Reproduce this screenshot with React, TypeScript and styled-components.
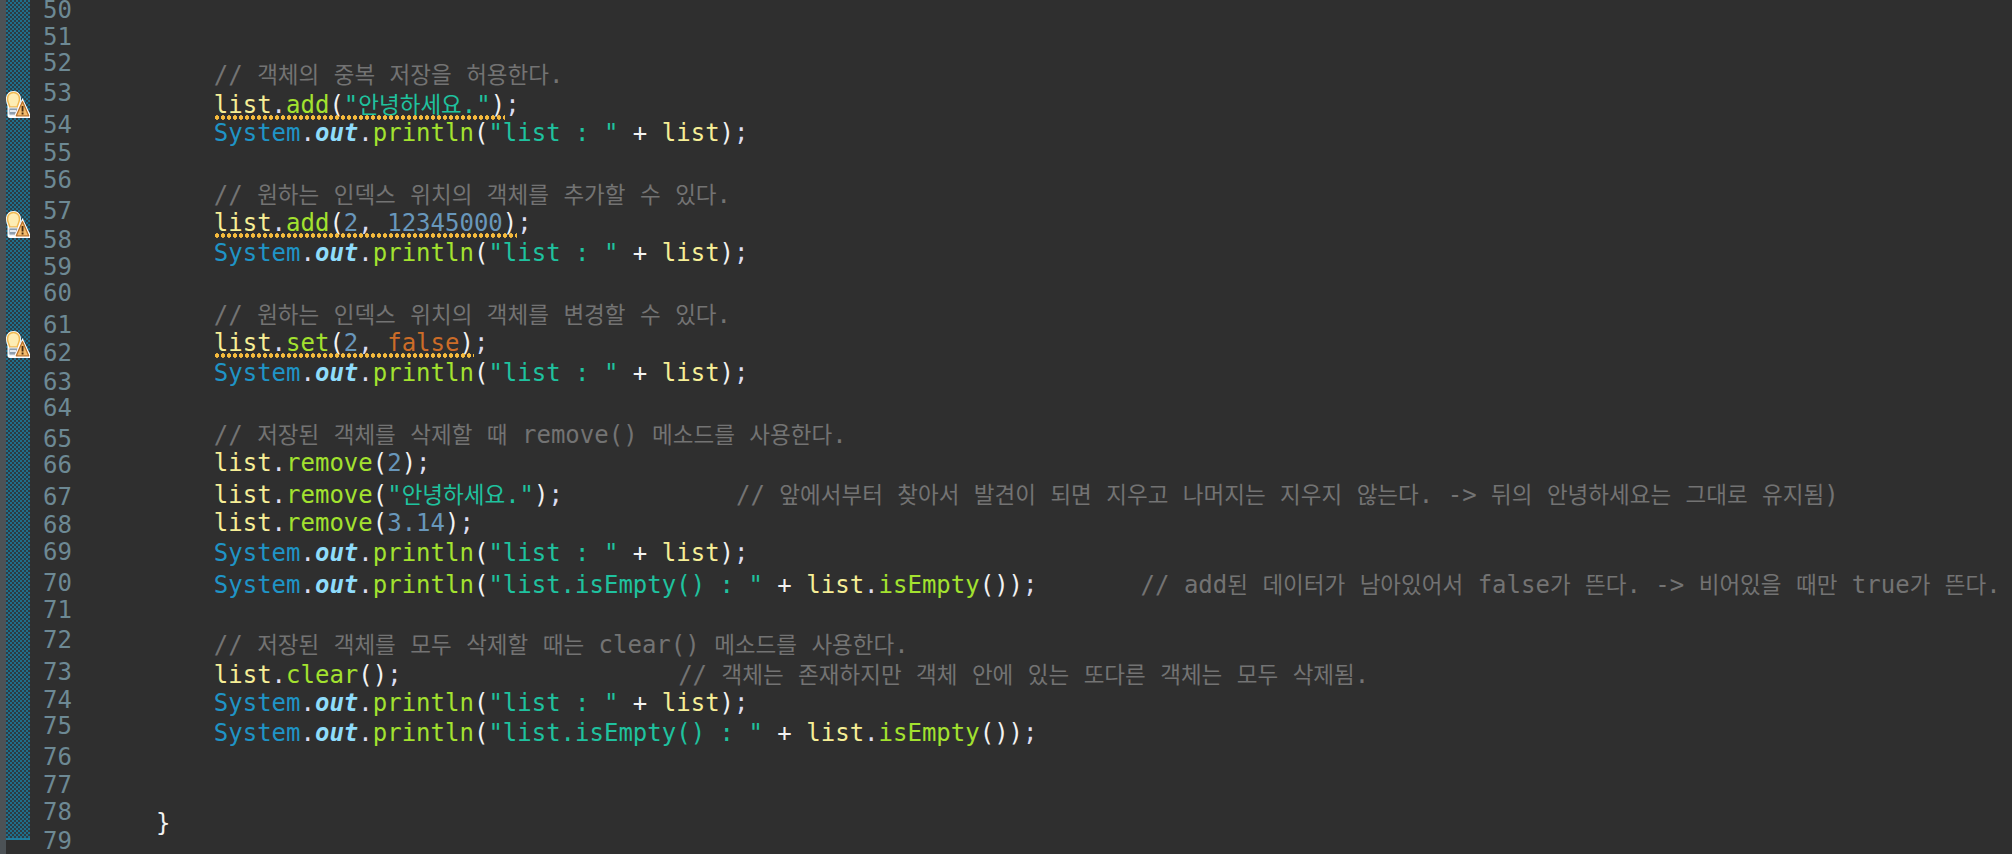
import React from "react";
import styled, { createGlobalStyle } from "styled-components";

type Kind = "plain" | "local" | "method" | "string" | "type" | "field" | "num" | "bool" | "comment" | "punct";
type Token = [Kind, string];

const colors: Record<Kind, string> = {
  plain: "#f2f2f2",
  local: "#f6ee96",
  method: "#a3e22f",
  string: "#1fc29f",
  type: "#1f94c6",
  field: "#8fdcfb",
  num: "#6897bb",
  bool: "#cc6c28",
  comment: "#737373",
  punct: "#dcdcf0",
};

const GlobalStyle = createGlobalStyle`
  html, body {
    margin: 0;
    height: 100%;
    background: #2f2f2f;
  }
  #root {
    height: 100%;
  }
`;

const Editor = styled.div`
  display: flex;
  width: 2012px;
  height: 854px;
  overflow: hidden;
  background: #2f2f2f;
  font-family: "DejaVu Sans Mono", "Noto Sans CJK KR", monospace;
  font-size: 24px;
`;

const Strip = styled.div`
  width: 6px;
  flex: none;
  background: #4c5256;
`;

const Ruler = styled.div`
  position: relative;
  width: 24px;
  height: 838px;
  flex: none;
  border-bottom: 2px solid #1f7c9e;
  background-image: conic-gradient(#1f6f8c 25%, #2d3c44 0 50%, #1f6f8c 0 75%, #2d3c44 0);
  background-size: 4px 4px;
`;

const Marker = styled.svg<{ $top: number }>`
  position: absolute;
  left: 0;
  top: ${(p) => p.$top}px;
`;

const Numbers = styled.div`
  width: 42px;
  flex: none;
  margin-left: 13px;
  color: #6d8994;
`;

const NumberRow = styled.div<{ $h: number }>`
  height: ${(p) => p.$h}px;
  line-height: 20px;
  white-space: nowrap;
`;

const Code = styled.div`
  flex: 1;
  padding: 58px 0 0 71px;
  white-space: pre;
`;

const Body = styled.div`
  padding-left: 4ch;
`;

const Row = styled.div`
  height: 30px;
  line-height: 30px;
`;

const Tok = styled.span<{ $kind: Kind }>`
  color: ${(p) => colors[p.$kind]};
  ${(p) => (p.$kind === "field" ? "font-weight: 700; font-style: italic;" : "")}
`;

const Hangul = styled.span`
  font-family: "Noto Sans CJK KR", sans-serif;
  font-size: 22.5px;
`;

const Warn = styled.span`
  position: relative;
  &::after {
    content: "";
    position: absolute;
    left: 0;
    right: 0;
    bottom: -1px;
    height: 5px;
    background-image: radial-gradient(circle at center, #f5ba3c 2px, transparent 2.5px);
    background-size: 6px 5px;
  }
`;

const Statement = styled.span<{ $col: number }>`
  display: inline-block;
  width: calc(${(p) => p.$col}ch + 2px);
`;

const heights = [27, 26, 30, 32, 28, 27, 31, 29, 27, 26, 32, 28, 29, 26, 31, 26, 32, 28, 27, 31, 27, 30, 32, 28, 26, 31, 28, 27, 29, 20];

function Text({ kind, text }: { kind: Kind; text: string }) {
  return (
    <Tok $kind={kind}>
      {text.split(/([가-힣]+)/).map((part, i) => (i % 2 ? <Hangul key={i}>{part}</Hangul> : part))}
    </Tok>
  );
}

function Tokens({ items }: { items: Token[] }) {
  return (
    <>
      {items.map(([kind, text], i) => (
        <Text key={i} kind={kind} text={text} />
      ))}
    </>
  );
}

const printList: Token[] = [
  ["type", "System"],
  ["punct", "."],
  ["field", "out"],
  ["punct", "."],
  ["method", "println"],
  ["plain", "("],
  ["string", '"list : "'],
  ["plain", " + "],
  ["local", "list"],
  ["plain", ")"],
  ["punct", ";"],
];

const printEmpty: Token[] = [
  ["type", "System"],
  ["punct", "."],
  ["field", "out"],
  ["punct", "."],
  ["method", "println"],
  ["plain", "("],
  ["string", '"list.isEmpty() : "'],
  ["plain", " + "],
  ["local", "list"],
  ["punct", "."],
  ["method", "isEmpty"],
  ["plain", "())"],
  ["punct", ";"],
];

const call = (name: string, ...args: Token[]): Token[] => [
  ["local", "list"],
  ["punct", "."],
  ["method", name],
  ["plain", "("],
  ...args,
];

const close: Token[] = [
  ["plain", ")"],
  ["punct", ";"],
];

function BulbWarning({ top }: { top: number }) {
  return (
    <Marker $top={top} width="24" height="27" viewBox="0 0 24 27">
      <path d="M7.500 0C3 0 0 3.500 0 8c0 3.500 1.500 5.500 1.500 8v8.500C1.500 26 2.500 27 4 27h7c1.500 0 2.500-1 2.500-2.500V16c1-2 1.500-4.500 1.500-8C15 3.500 12 0 7.500 0z" fill="#fff" />
      <path d="M7.500 1.500C4 1.500 1.500 4.300 1.500 8c0 3 1.600 5 2.300 8h7.400c.7-3 2.300-5 2.300-8 0-3.700-2.500-6.500-6-6.500z" fill="#fdedb4" stroke="#f0b850" strokeWidth="1.500" />
      <rect x="3" y="17" width="9" height="7" rx="1" fill="#8d9eae" stroke="#dfe6ec" />
      <rect x="4" y="19" width="6" height="2" fill="#e4ebf1" />
      <path d="M16.500 7L24 23v4H9v-4z" fill="#fff" />
      <path d="M16.500 10.500L22.700 24.800H10.300z" fill="#f3bc6c" stroke="#b9722a" strokeWidth="1.300" strokeLinejoin="round" />
      <rect x="15.600" y="15" width="1.900" height="5.500" fill="#4a2c10" />
      <rect x="15.600" y="21.500" width="1.900" height="2" fill="#4a2c10" />
    </Marker>
  );
}

export default function App() {
  return (
    <Editor>
      <GlobalStyle />
      <Strip />
      <Ruler>
        <BulbWarning top={91} />
        <BulbWarning top={211} />
        <BulbWarning top={331} />
      </Ruler>
      <Numbers>
        {heights.map((h, i) => (
          <NumberRow key={i} $h={h}>
            {50 + i}
          </NumberRow>
        ))}
      </Numbers>
      <Code>
        <Body>
          <Row>
            <Text kind="comment" text="// 객체의 중복 저장을 허용한다." />
          </Row>
          <Row>
            <Warn>
              <Tokens items={call("add", ["string", '"안녕하세요."'], ["plain", ")"])} />
            </Warn>
            <Tok $kind="punct">;</Tok>
          </Row>
          <Row>
            <Tokens items={printList} />
          </Row>
          <Row />
          <Row>
            <Text kind="comment" text="// 원하는 인덱스 위치의 객체를 추가할 수 있다." />
          </Row>
          <Row>
            <Warn>
              <Tokens items={call("add", ["num", "2"], ["punct", ", "], ["num", "12345000"], ["plain", ")"])} />
            </Warn>
            <Tok $kind="punct">;</Tok>
          </Row>
          <Row>
            <Tokens items={printList} />
          </Row>
          <Row />
          <Row>
            <Text kind="comment" text="// 원하는 인덱스 위치의 객체를 변경할 수 있다." />
          </Row>
          <Row>
            <Warn>
              <Tokens items={call("set", ["num", "2"], ["punct", ", "], ["bool", "false"], ["plain", ")"])} />
            </Warn>
            <Tok $kind="punct">;</Tok>
          </Row>
          <Row>
            <Tokens items={printList} />
          </Row>
          <Row />
          <Row>
            <Text kind="comment" text="// 저장된 객체를 삭제할 때 remove() 메소드를 사용한다." />
          </Row>
          <Row>
            <Tokens items={[...call("remove", ["num", "2"]), ...close]} />
          </Row>
          <Row>
            <Statement $col={36}>
              <Tokens items={[...call("remove", ["string", '"안녕하세요."']), ...close]} />
            </Statement>
            <Text kind="comment" text="// 앞에서부터 찾아서 발견이 되면 지우고 나머지는 지우지 않는다. -> 뒤의 안녕하세요는 그대로 유지됨)" />
          </Row>
          <Row>
            <Tokens items={[...call("remove", ["num", "3.14"]), ...close]} />
          </Row>
          <Row>
            <Tokens items={printList} />
          </Row>
          <Row>
            <Statement $col={64}>
              <Tokens items={printEmpty} />
            </Statement>
            <Text kind="comment" text="// add된 데이터가 남아있어서 false가 뜬다. -> 비어있을 때만 true가 뜬다." />
          </Row>
          <Row />
          <Row>
            <Text kind="comment" text="// 저장된 객체를 모두 삭제할 때는 clear() 메소드를 사용한다." />
          </Row>
          <Row>
            <Statement $col={32}>
              <Tokens items={[...call("clear"), ...close]} />
            </Statement>
            <Text kind="comment" text="// 객체는 존재하지만 객체 안에 있는 또다른 객체는 모두 삭제됨." />
          </Row>
          <Row>
            <Tokens items={printList} />
          </Row>
          <Row>
            <Tokens items={printEmpty} />
          </Row>
          <Row />
          <Row />
        </Body>
        <Row>
          <Tok $kind="plain">{"}"}</Tok>
        </Row>
      </Code>
    </Editor>
  );
}
